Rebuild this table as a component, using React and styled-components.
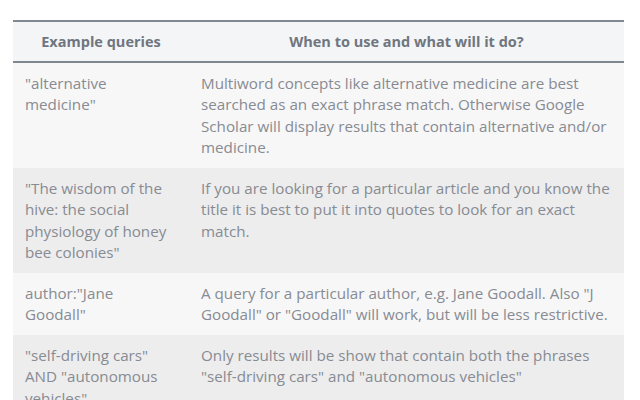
import styled, { createGlobalStyle } from "styled-components"

const Global = createGlobalStyle`
  html, body {
    margin: 0;
    padding: 0;
    background: #ffffff;
  }
  body {
    font-family: "Open Sans", Lato, sans-serif;
  }
`

const Page = styled.div`
  padding: 20px 16px 0 13px;
  height: 400px;
  box-sizing: border-box;
  overflow: hidden;
`

const Table = styled.table`
  width: 611px;
  border-collapse: collapse;
  table-layout: fixed;
  font-size: 15.2px;
  line-height: 21.5px;
  color: #878b92;
`

const HeadRow = styled.tr`
  background: #f4f5f6;
  border-top: 2px solid #7f8791;
  border-bottom: 2px solid #7f8791;
`

const Th = styled.th`
  height: 39px;
  padding: 0 12px;
  text-align: center;
  font-weight: 700;
  font-size: 14.5px;
  color: #6f7680;
  width: ${(p) => p.$width || "auto"};
`

const Row = styled.tr`
  background: ${(p) => (p.$shade ? "#ededee" : "#f7f7f8")};
`

const Td = styled.td`
  padding: 9.5px 11px 9.5px 12px;
  vertical-align: top;
  font-weight: 400;
`

const QueryCell = styled(Td)`
  padding-right: 17px;
`

const rows = [
  {
    q: '"alternative medicine"',
    a: "Multiword concepts like alternative medicine are best searched as an exact phrase match. Otherwise Google Scholar will display results that contain alternative and/or medicine.",
  },
  {
    q: '"The wisdom of the hive: the social physiology of honey bee colonies"',
    a: "If you are looking for a particular article and you know the title it is best to put it into quotes to look for an exact match.",
  },
  {
    q: 'author:"Jane Goodall"',
    a: 'A query for a particular author, e.g. Jane Goodall. Also "J Goodall" or "Goodall" will work, but will be less restrictive.',
  },
  {
    q: '"self-driving cars" AND "autonomous vehicles"',
    a: 'Only results will be show that contain both the phrases "self-driving cars" and "autonomous vehicles"',
  },
]

export default function App() {
  return (
    <Page>
      <Global />
      <Table>
        <thead>
          <HeadRow>
            <Th $width="152px">Example queries</Th>
            <Th>When to use and what will it do?</Th>
          </HeadRow>
        </thead>
        <tbody>
          {rows.map((r, i) => (
            <Row key={i} $shade={i % 2 === 1}>
              <QueryCell>{r.q}</QueryCell>
              <Td>{r.a}</Td>
            </Row>
          ))}
        </tbody>
      </Table>
    </Page>
  )
}
